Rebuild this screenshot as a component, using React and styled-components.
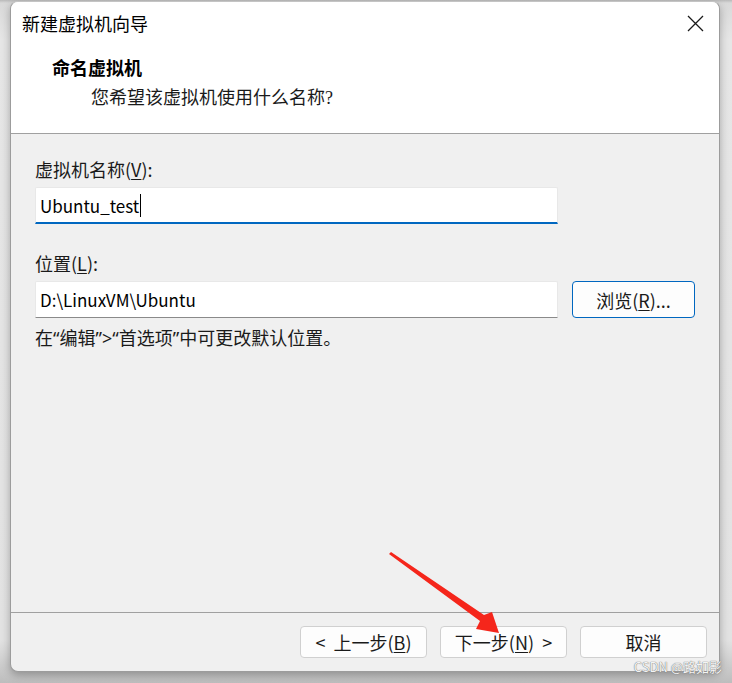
import React from 'react';
import styled, { createGlobalStyle } from 'styled-components';

const GlobalStyle = createGlobalStyle`
  html, body {
    margin: 0;
    padding: 0;
    background: #e4e4e4;
  }
  * {
    box-sizing: border-box;
  }
`;

const FONT = `"Segoe UI", "Noto Sans CJK SC", sans-serif`;
const SERIF = `"Liberation Serif", "Noto Sans CJK SC", serif`;

const Stage = styled.div`
  position: relative;
  width: 732px;
  height: 683px;
  padding: 1px 12px 11px 10px;
  background: linear-gradient(180deg, #b9b9b9 0px, #d9d9d9 3px, #e6e6e6 40px, #e2e2e2 640px, #bdbdbd 683px);
  overflow: hidden;
`;

const Window = styled.div`
  display: flex;
  flex-direction: column;
  width: 710px;
  height: 671px;
  background: #f0f0f0;
  border: 1px solid #9c9c9c;
  border-top-color: #c4c4c4;
  border-radius: 8px;
  overflow: hidden;
  box-shadow: 0 3px 9px rgba(0, 0, 0, 0.28);
  font-family: ${FONT};
  color: #000;
`;

const Header = styled.div`
  background: #fff;
  height: 132px;
  border-bottom: 1px solid #a0a0a0;
  display: flex;
  flex-direction: column;
`;

const TitleBar = styled.div`
  display: flex;
  align-items: center;
  justify-content: space-between;
  height: 42px;
  padding: 0 14px 0 11px;
`;

const Title = styled.div`
  font-size: 18px;
  line-height: 24px;
`;

const CloseBtn = styled.div`
  width: 20px;
  height: 20px;
  display: flex;
  align-items: center;
  justify-content: center;
`;

const Heading = styled.div`
  margin: 13px 0 0 41px;
  font-family: ${SERIF};
  font-weight: bold;
  font-size: 18px;
  line-height: 24px;
`;

const SubHeading = styled.div`
  margin: 5px 0 0 80px;
  font-family: ${SERIF};
  font-size: 18px;
  line-height: 24px;
  color: #1a1a1a;
`;

const Body = styled.div`
  flex: 1;
  display: flex;
  flex-direction: column;
  padding: 23px 24px 0;
  border-bottom: 1px solid #a0a0a0;
`;

const Label = styled.div`
  font-size: 18px;
  line-height: 24px;
  color: #1a1a1a;
  margin-top: ${(p) => p.$top || 0}px;
`;

const Key = styled.u`
  text-underline-offset: 2px;
`;

const Row = styled.div`
  display: flex;
  gap: 14px;
  margin-top: 6px;
`;

const Field = styled.div`
  width: 523px;
  height: 37px;
  display: flex;
  align-items: center;
  padding: 0 4px;
  background: #fff;
  border: 1px solid #e8e8e8;
  border-bottom: ${(p) => (p.$focused ? '2px solid #0067c0' : '1px solid #8a8a8a')};
  border-radius: 2px 2px 0 0;
  font-size: 17px;
  color: #000;
`;

const Caret = styled.span`
  display: inline-block;
  width: 1px;
  height: 23px;
  margin-left: 1px;
  background: #000;
`;

const Button = styled.div`
  width: ${(p) => p.$w || 127}px;
  height: ${(p) => p.$h || 32}px;
  display: flex;
  align-items: center;
  justify-content: center;
  background: #fdfdfd;
  border: 1px solid ${(p) => (p.$primary ? '#0067c0' : '#d0d0d0')};
  border-radius: 4px;
  font-size: 18px;
  line-height: 24px;
  color: #1a1a1a;
  white-space: pre;
`;

const Note = styled.div`
  margin-top: 8px;
  font-family: "Noto Sans", "Noto Sans CJK SC", sans-serif;
  font-size: 18px;
  line-height: 24px;
  color: #1a1a1a;
`;

const Footer = styled.div`
  height: 58px;
  display: flex;
  justify-content: flex-end;
  gap: 13px;
  padding: 13px 12px 0 0;
`;

const Overlay = styled.svg`
  position: absolute;
  left: 0;
  top: 0;
  pointer-events: none;
`;

const Watermark = styled.div`
  position: absolute;
  right: 10px;
  bottom: 8px;
  font-family: ${FONT};
  font-size: 13px;
  line-height: 16px;
  color: #f4f4f4;
  text-shadow: 0 0 1px #777, 0 0 1px #777;
`;

export default function App() {
  return (
    <Stage>
      <GlobalStyle />
      <Window>
        <Header>
          <TitleBar>
            <Title>新建虚拟机向导</Title>
            <CloseBtn>
              <svg width="17" height="17" viewBox="0 0 17 17">
                <path d="M1 1 L16 16 M16 1 L1 16" stroke="#1a1a1a" strokeWidth="1.3" />
              </svg>
            </CloseBtn>
          </TitleBar>
          <Heading>命名虚拟机</Heading>
          <SubHeading>您希望该虚拟机使用什么名称?</SubHeading>
        </Header>
        <Body>
          <Label>
            虚拟机名称(<Key>V</Key>):
          </Label>
          <Row>
            <Field $focused>
              Ubuntu_test<Caret />
            </Field>
          </Row>
          <Label $top={27}>
            位置(<Key>L</Key>):
          </Label>
          <Row>
            <Field>D:\LinuxVM\Ubuntu</Field>
            <Button $primary $w={123} $h={37}>
              浏览(<Key>R</Key>)...
            </Button>
          </Row>
          <Note>在“编辑”&gt;“首选项”中可更改默认位置。</Note>
        </Body>
        <Footer>
          <Button>
            {'<  上一步('}<Key>B</Key>)
          </Button>
          <Button>
            下一步(<Key>N</Key>){'  >'}
          </Button>
          <Button>取消</Button>
        </Footer>
      </Window>
      <Overlay width="732" height="683" viewBox="0 0 732 683">
        <polygon
          points="391,552 484,615 492,612 499,633 476,629 480,621 389,554"
          fill="#f5261b"
        />
      </Overlay>
      <Watermark>CSDN @路如影</Watermark>
    </Stage>
  );
}
